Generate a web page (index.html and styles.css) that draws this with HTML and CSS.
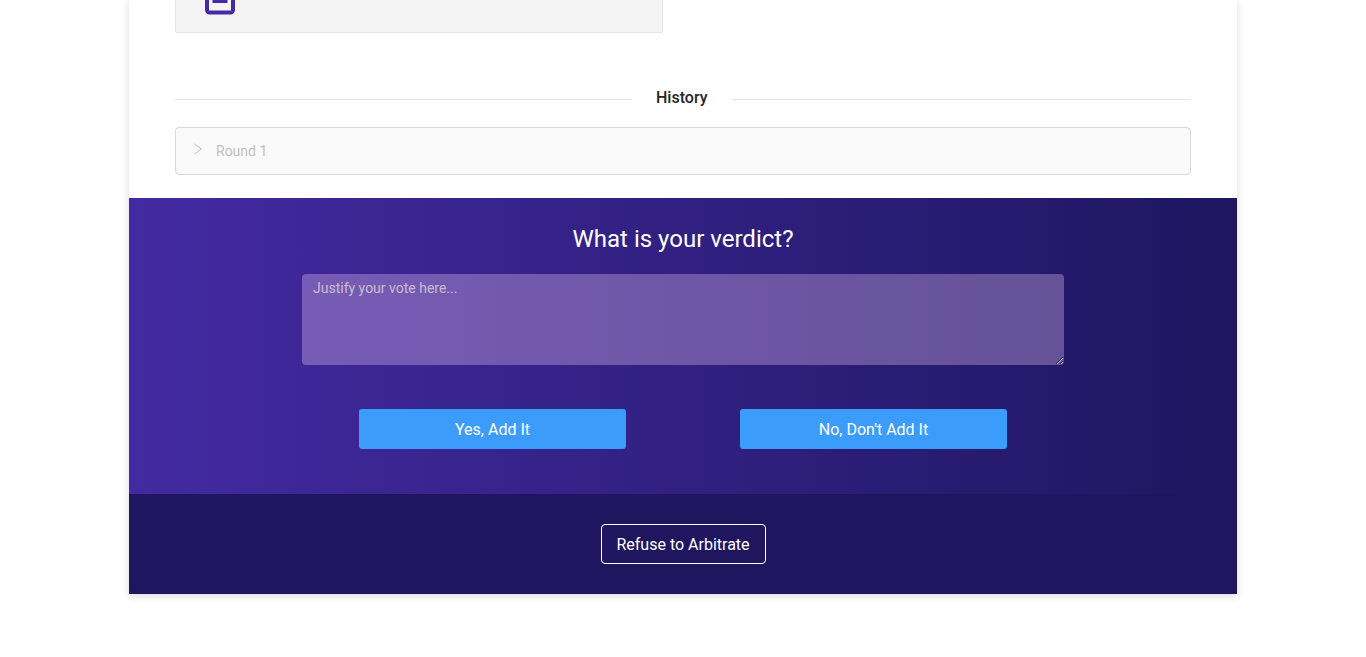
FILE: index.html
```html
<!DOCTYPE html>
<html lang="en">
<head>
<meta charset="utf-8">
<title>Arbitration</title>
<link rel="stylesheet" href="styles.css">
</head>
<body>
<main class="card">
  <section class="content">
    <div class="evidence">
      <svg class="evidence-icon" width="30" height="15" viewBox="0 0 30 15" aria-hidden="true">
        <path d="M2 0V10A2.500 2.500 0 0 0 4.500 12.500H25.500A2.500 2.500 0 0 0 28 10V0" fill="none" stroke="#452aa3" stroke-width="4"/>
        <rect x="7.500" y="0" width="15" height="3" fill="#452aa3"/>
      </svg>
    </div>
    <div class="divider"><span class="divider-text">History</span></div>
    <div class="collapse">
      <svg class="chevron" width="10" height="12" viewBox="0 0 10 12" aria-hidden="true">
        <path d="M1.500 1L8.500 6L1.500 11" fill="none" stroke="#bdbdbd" stroke-width="1"/>
      </svg>
      <span class="collapse-title">Round 1</span>
    </div>
  </section>
  <section class="verdict">
    <h2 class="verdict-title">What is your verdict?</h2>
    <textarea class="justify" placeholder="Justify your vote here..."></textarea>
    <div class="choices">
      <button class="choice">Yes, Add It</button>
      <button class="choice">No, Don't Add It</button>
    </div>
  </section>
  <section class="refuse">
    <button class="refuse-btn">Refuse to Arbitrate</button>
  </section>
</main>
</body>
</html>
```
FILE: styles.css
```css
* { box-sizing: border-box; }
html, body { margin: 0; height: 657px; overflow: hidden; background: #fff; }
body { font-family: Roboto, "Liberation Sans", sans-serif; }
.card {
  width: 1108px;
  margin: 0 auto;
  background: #fff;
  box-shadow: 0 2px 8px rgba(0, 0, 0, 0.15);
}
.content { padding: 0 46px 23px; }
.evidence {
  width: 488px;
  height: 33px;
  padding-left: 29px;
  background: #f4f4f4;
  border: 1px solid #e6e6e6;
  border-top: 0;
  border-radius: 0 0 2px 2px;
}
.evidence-icon { display: block; }
.divider {
  display: flex;
  align-items: center;
  margin-top: 53px;
  height: 24px;
  color: #262626;
  font-size: 16px;
  font-weight: 500;
}
.divider::before, .divider::after {
  content: "";
  height: 1px;
  background: #e8e8e8;
  margin-top: 2px;
}
.divider::before { flex: 0 0 457px; }
.divider::after { flex: 1; }
.divider-text { padding: 0 24px; line-height: 22px; }
.collapse {
  display: flex;
  align-items: center;
  height: 48px;
  margin-top: 17px;
  padding-left: 17px;
  background: #fafafa;
  border: 1px solid #d9d9d9;
  border-radius: 4px;
  color: #bfbfbf;
  font-size: 14px;
}
.chevron { margin-top: -4px; }
.collapse-title { margin-left: 13px; }
.verdict {
  display: flex;
  flex-direction: column;
  align-items: center;
  height: 296px;
  padding-top: 25px;
  background: linear-gradient(90deg, #432aa2 0%, #1e1660 100%);
}
.verdict-title {
  margin: 0;
  color: #fff;
  font-size: 24px;
  font-weight: 400;
  line-height: 32px;
}
.justify {
  display: block;
  width: 762px;
  height: 91px;
  margin-top: 19px;
  padding: 4px 11px;
  background: rgba(255, 215, 255, 0.3);
  border: 0;
  border-radius: 4px;
  color: #fff;
  font-family: inherit;
  font-size: 14px;
  line-height: 20px;
  outline: none;
}
.justify::placeholder { color: rgba(255, 255, 225, 0.6); }
.choices {
  display: flex;
  gap: 114px;
  margin-top: 44px;
}
.choice {
  width: 267px;
  height: 40px;
  background: #3c9cfc;
  border: 0;
  border-radius: 3px;
  color: #fff;
  font-family: inherit;
  font-size: 16px;
}
.refuse {
  display: flex;
  justify-content: center;
  align-items: center;
  height: 100px;
  background: #201660;
}
.refuse-btn {
  width: 165px;
  height: 40px;
  padding: 0;
  background: transparent;
  border: 1px solid #fff;
  border-radius: 4px;
  color: #fff;
  font-family: inherit;
  font-size: 16px;
}
```
